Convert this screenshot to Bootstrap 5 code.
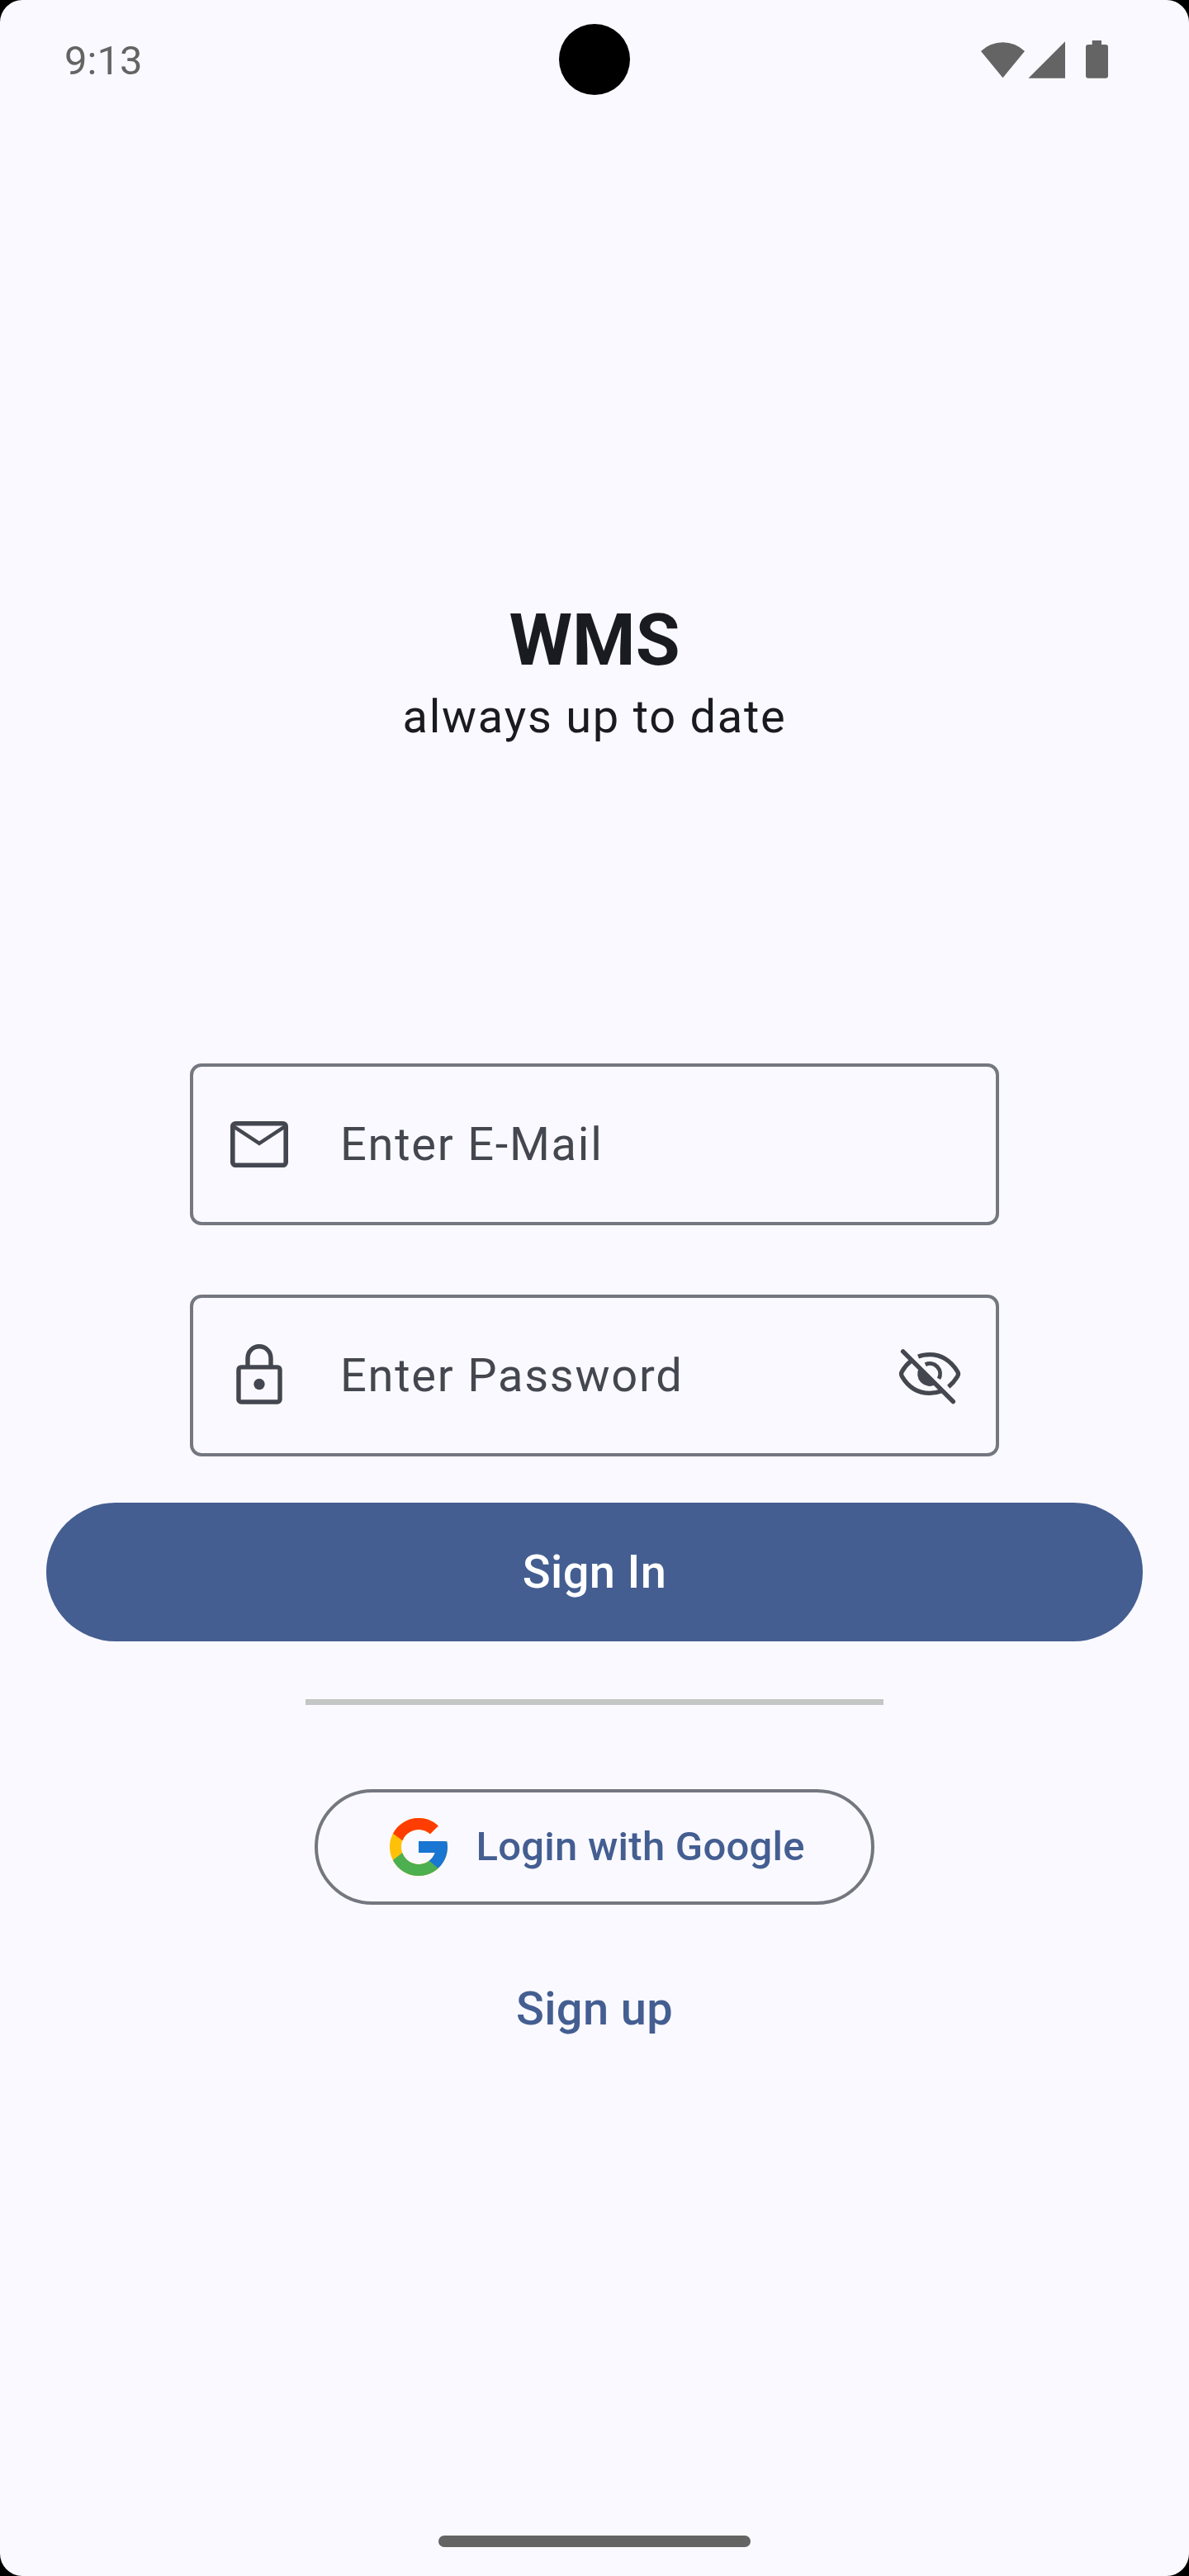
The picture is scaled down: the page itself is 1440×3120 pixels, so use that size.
<!DOCTYPE html>
<html lang="en">
<head>
<meta charset="utf-8">
<meta name="viewport" content="width=device-width, initial-scale=1">
<title>WMS</title>
<link href="https://cdn.jsdelivr.net/npm/bootstrap@5.3.0/dist/css/bootstrap.min.css" rel="stylesheet">
<style>
  body { background: #000; font-family: Roboto, "Liberation Sans", sans-serif; }
  svg { display: block; flex: none; }
  .screen { width: 1440px; height: 3120px; background: #faf9ff; border-radius: 27px; color: #1a1b20; }
  .status-bar { height: 144px; padding: 4px 98px 0 78px; color: #646464; font-size: 49px; line-height: 58px; }
  .status-icons { height: 46px; margin-top: -4px; }
  .camera { width: 86px; height: 86px; top: 29px; left: 677px; background: #000; }
  .brand { margin-top: 575px; }
  .brand h1 { font-size: 87.5px; line-height: 112px; font-weight: 700; }
  .brand p { font-size: 56px; line-height: 84px; letter-spacing: 1.75px; margin-top: -5px; }
  .fields { width: 980px; margin-top: 378px; gap: 84px; }
  .field { height: 196px; border: 4px solid #74777f; border-radius: 14px; background: transparent; color: #44474f; font-size: 56px; letter-spacing: 1.75px; padding: 0 38px; gap: 56px; }
  .btn-signin { width: 1328px; height: 168px; margin-top: 56px; background: #445e91; color: #fff; font-size: 56px; font-weight: 500; letter-spacing: .35px; }
  .rule { width: 700px; height: 7px; margin-top: 70px; background: #c4c6c5; }
  .btn-google { width: 678px; height: 140px; margin-top: 102px; padding: 0 0 0 87px; border: 4px solid #74777f; color: #445e91; font-size: 49px; font-weight: 500; letter-spacing: .25px; gap: 34.5px; }
  .btn-signup { height: 168px; margin-top: 42px; color: #445e91; font-size: 56px; font-weight: 500; letter-spacing: .35px; border: 0; }
  .home-bar { width: 378px; height: 14px; margin-bottom: 35px; background: #646464; }
</style>
</head>
<body>
<div class="screen position-relative d-flex flex-column align-items-center overflow-hidden">
  <header class="status-bar w-100 d-flex justify-content-between align-items-center">
    <span>9:13</span>
    <div class="status-icons d-flex">
      <svg width="154" height="46" viewBox="0 0 154 46" fill="#646464">
        <path d="M0 13A38 38 0 0 1 53 13L26.5 45.3Z"/>
        <path d="M57.5 45.7L102 1.3V45.7Z"/>
        <path d="M134.7 0H146V5H151a3 3 0 0 1 3 3V42.7a3 3 0 0 1-3 3H130a3 3 0 0 1-3-3V8a3 3 0 0 1 3-3H134.7Z"/>
      </svg>
    </div>
  </header>
  <div class="camera position-absolute rounded-circle"></div>

  <section class="brand text-center">
    <h1 class="m-0">WMS</h1>
    <p class="mb-0">always up to date</p>
  </section>

  <section class="fields d-flex flex-column">
    <div class="field d-flex align-items-center">
      <svg width="84" height="84" viewBox="0 0 24 24" fill="none" stroke="#44474f">
        <rect x="2.8" y="4.8" width="18.4" height="14.4" rx="1" stroke-width="1.6"/>
        <path d="M2.9 5.7L12 11.7L21.1 5.7" stroke-width="1.25"/>
      </svg>
      <span>Enter E-Mail</span>
    </div>
    <div class="field d-flex align-items-center">
      <svg width="84" height="84" viewBox="0 0 24 24" fill="none" stroke="#44474f" stroke-width="1.55">
        <rect x="4.85" y="9.1" width="14.3" height="12.05" rx=".9"/>
        <path d="M8 9V5.95a4 4 0 0 1 8 0V9"/>
        <circle cx="12" cy="15" r="1.9" fill="#44474f" stroke="none"/>
      </svg>
      <span>Enter Password</span>
      <svg class="ms-auto" width="84" height="84" viewBox="0 0 24 24" fill="none" stroke="#44474f" stroke-width="1.5">
        <path d="M8 5.45C9.2 4.95 10.6 4.75 12 4.75C16.2 4.75 19.4 7.1 21.6 10.6Q22.15 11.45 21.6 12.3C20.8 13.6 19.8 14.8 18.5 15.9"/>
        <path d="M5.6 6.9C4.2 8 3.2 9.2 2.4 10.6Q1.9 11.45 2.4 12.3C4.6 16 8 18.1 12 18.1C13.6 18.1 15 17.8 16.3 17.3"/>
        <path d="M8.35 9.28A4.25 4.25 0 0 0 14.17 15.1Z" fill="#44474f" stroke="none"/>
        <path d="M10.5 8.2A3.55 3.55 0 0 1 15.15 13.1" stroke-width="1.4"/>
        <path d="M2.75 3.7L20.1 21" stroke-linecap="round" stroke-width="1.55"/>
      </svg>
    </div>
  </section>

  <button type="button" class="btn btn-signin rounded-pill border-0 p-0">Sign In</button>
  <div class="rule"></div>
  <button type="button" class="btn btn-google rounded-pill d-flex align-items-center">
    <svg width="70" height="70" viewBox="4 4 40 40">
      <path fill="#FFC107" d="M43.611 20.083H42V20H24v8h11.303c-1.649 4.657-6.08 8-11.303 8-6.627 0-12-5.373-12-12s5.373-12 12-12c3.059 0 5.842 1.154 7.961 3.039l5.657-5.657C34.046 6.053 29.268 4 24 4 12.955 4 4 12.955 4 24s8.955 20 20 20 20-8.955 20-20c0-1.341-.138-2.65-.389-3.917z"/>
      <path fill="#FF3D00" d="M6.306 14.691l6.571 4.819C14.655 15.108 18.961 12 24 12c3.059 0 5.842 1.154 7.961 3.039l5.657-5.657C34.046 6.053 29.268 4 24 4 16.318 4 9.656 8.337 6.306 14.691z"/>
      <path fill="#4CAF50" d="M24 44c5.166 0 9.86-1.977 13.409-5.192l-6.19-5.238C29.211 35.091 26.715 36 24 36c-5.202 0-9.619-3.317-11.283-7.946l-6.522 5.025C9.505 39.556 16.227 44 24 44z"/>
      <path fill="#1976D2" d="M43.611 20.083H42V20H24v8h11.303c-.792 2.237-2.231 4.166-4.087 5.571l6.193 5.238C36.971 39.205 44 34 44 24c0-1.341-.138-2.65-.389-3.917z"/>
    </svg>
    <span>Login with Google</span>
  </button>
  <button type="button" class="btn btn-signup">Sign up</button>

  <div class="home-bar rounded-pill mt-auto"></div>
</div>
<script src="https://cdn.jsdelivr.net/npm/bootstrap@5.3.0/dist/js/bootstrap.bundle.min.js"></script>
</body>
</html>
